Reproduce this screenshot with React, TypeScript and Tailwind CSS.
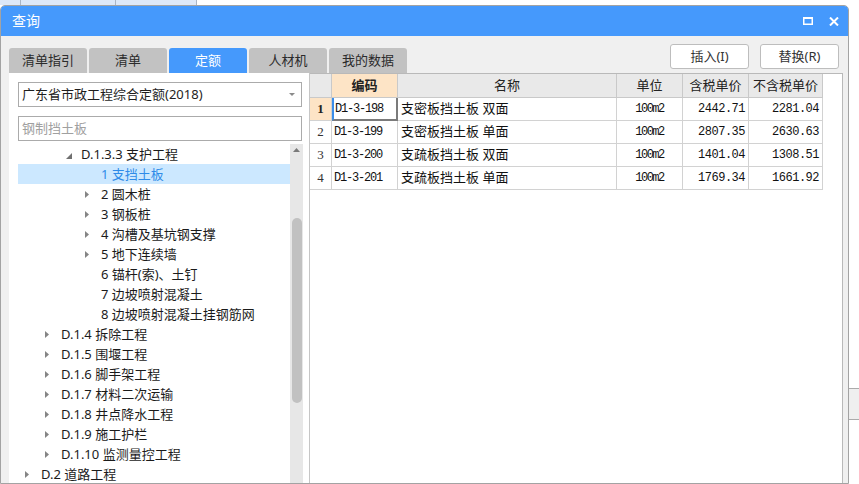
import React from 'react';

const tabs = ['清单指引', '清单', '定额', '人材机', '我的数据'];

type Node = { level: number; label: string; state: 'open' | 'closed' | 'leaf'; selected?: boolean };

const tree: Node[] = [
  { level: 2, label: 'D.1.3.3 支护工程', state: 'open' },
  { level: 3, label: '1 支挡土板', state: 'leaf', selected: true },
  { level: 3, label: '2 圆木桩', state: 'closed' },
  { level: 3, label: '3 钢板桩', state: 'closed' },
  { level: 3, label: '4 沟槽及基坑钢支撑', state: 'closed' },
  { level: 3, label: '5 地下连续墙', state: 'closed' },
  { level: 3, label: '6 锚杆(索)、土钉', state: 'leaf' },
  { level: 3, label: '7 边坡喷射混凝土', state: 'leaf' },
  { level: 3, label: '8 边坡喷射混凝土挂钢筋网', state: 'leaf' },
  { level: 1, label: 'D.1.4 拆除工程', state: 'closed' },
  { level: 1, label: 'D.1.5 围堰工程', state: 'closed' },
  { level: 1, label: 'D.1.6 脚手架工程', state: 'closed' },
  { level: 1, label: 'D.1.7 材料二次运输', state: 'closed' },
  { level: 1, label: 'D.1.8 井点降水工程', state: 'closed' },
  { level: 1, label: 'D.1.9 施工护栏', state: 'closed' },
  { level: 1, label: 'D.1.10 监测量控工程', state: 'closed' },
  { level: 0, label: 'D.2 道路工程', state: 'closed' },
];

const rows = [
  ['1', 'D1-3-198', '支密板挡土板 双面', '100m2', '2442.71', '2281.04'],
  ['2', 'D1-3-199', '支密板挡土板 单面', '100m2', '2807.35', '2630.63'],
  ['3', 'D1-3-200', '支疏板挡土板 双面', '100m2', '1401.04', '1308.51'],
  ['4', 'D1-3-201', '支疏板挡土板 单面', '100m2', '1769.34', '1661.92'],
];

const indent = ['pl-[7px]', 'pl-[27px]', 'pl-[47px]', 'pl-[67px]'];

const TreeRow: React.FC<{ node: Node }> = ({ node }) => (
  <div
    className={`h-[20px] flex items-center ${indent[node.level]} ${
      node.selected ? 'bg-[#cce8ff] text-[#2f8be8]' : 'text-[#1b1b1b]'
    }`}
  >
    <span className="w-[16px] h-[20px] shrink-0 flex items-center">
      {node.state === 'closed' && (
        <svg width="4" height="7" viewBox="0 0 4 7">
          <polygon points="0,0 4,3.5 0,7" fill="#858585" />
        </svg>
      )}
      {node.state === 'open' && (
        <svg width="6" height="6" viewBox="0 0 6 6" className="ml-[1px] mt-[3px]">
          <polygon points="6,0 6,6 0,6" fill="#707070" />
        </svg>
      )}
    </span>
    <span className="text-[13px] leading-[20px] whitespace-nowrap">{node.label}</span>
  </div>
);

const App: React.FC = () => {
  return (
    <div className="w-[859px] h-[484px] overflow-hidden bg-white font-['Noto_Sans','Noto_Sans_CJK_SC',sans-serif]">
      {/* strip of the window behind */}
      <div className="h-[5px] flex">
        <div className="w-[21px] bg-[#dde8f8] border-r border-[#aab5c5]" />
        <div className="w-[95px] bg-[#dde8f8] border-r border-[#aab5c5]" />
        <div className="w-[81px] bg-[#dde8f8] border-r border-[#aab5c5]" />
      </div>

      <div className="flex h-[479px]">
        <div className="w-[849px] h-full border border-[#a3a3a3] rounded-t-[5px] overflow-hidden bg-[#f0f0f0] flex flex-col">
          {/* title bar */}
          <div className="h-[30px] shrink-0 bg-[#4599fc] flex items-center justify-between pl-[11px] pr-[9px]">
            <span className="text-white text-[14px] leading-none">查询</span>
            <div className="flex items-center gap-[16px]">
              <svg width="10" height="8" viewBox="0 0 10 8">
                <rect x="0.75" y="1" width="8.5" height="6.25" fill="none" stroke="#fff" strokeWidth="1.5" />
                <rect x="0" y="0" width="10" height="2" fill="#fff" />
              </svg>
              <svg width="10" height="9" viewBox="0 0 10 9">
                <path d="M1 0.5 L9 8.5 M9 0.5 L1 8.5" stroke="#fff" strokeWidth="2" />
              </svg>
            </div>
          </div>

          {/* tabs + buttons */}
          <div className="h-[37px] shrink-0 flex justify-between pl-[8px] pr-[9px]">
            <div className="flex items-end gap-[2px]">
              {tabs.map((t) => (
                <div
                  key={t}
                  className={`w-[78px] h-[25px] rounded-t-[3px] flex items-center justify-center text-[13px] ${
                    t === '定额' ? 'bg-[#4599fc] text-white' : 'bg-[#c2c2c2] text-[#2b2b2b]'
                  }`}
                >
                  {t}
                </div>
              ))}
            </div>
            <div className="flex gap-[11px] mt-[8px]">
              {['插入(I)', '替换(R)'].map((b) => (
                <button
                  key={b}
                  className="w-[79px] h-[25px] bg-white border border-[#bdbdbd] rounded-[3px] text-[13px] text-[#333] flex items-center justify-center"
                >
                  {b}
                </button>
              ))}
            </div>
          </div>

          {/* panels */}
          <div className="flex-1 flex pl-[8px] min-h-0">
            {/* left panel */}
            <div className="w-[301px] bg-white border-r border-[#c6c6c6] pl-[9px] pt-[9px] flex flex-col">
              <div className="w-[284px] h-[25px] border border-[#ababab] flex items-center justify-between pl-[3px] pr-[6px]">
                <span className="text-[13px] text-[#1e1e1e]">广东省市政工程综合定额(2018)</span>
                <svg width="6" height="3" viewBox="0 0 6 3">
                  <polygon points="0,0 6,0 3,3" fill="#8a8a8a" />
                </svg>
              </div>
              <div className="w-[284px] h-[25px] mt-[9px] border border-[#ababab] flex items-center pl-[3px]">
                <span className="text-[13px] text-[#a0a0a0]">钢制挡土板</span>
              </div>
              <div className="flex mt-[3px] flex-1 min-h-0">
                <div className="w-[272px] overflow-hidden">
                  {tree.map((n) => (
                    <TreeRow key={n.label} node={n} />
                  ))}
                </div>
                <div className="w-[13px] bg-[#e7e7e7] flex flex-col items-center">
                  <svg width="7" height="4" viewBox="0 0 7 4" className="mt-[4px]">
                    <polygon points="0,4 7,4 3.5,0" fill="#7a7a7a" />
                  </svg>
                  <div className="mt-[66px] w-[10px] h-[185px] rounded-full bg-[#c1c1c1]" />
                </div>
              </div>
            </div>

            {/* right panel */}
            <div className="w-[533px] bg-white border-t border-r border-[#b9b9b9]">
              <div className="grid grid-cols-[22px_66px_219px_66px_66px_74px] w-[513px]">
                {['', '编码', '名称', '单位', '含税单价', '不含税单价'].map((h, i) => (
                  <div
                    key={i}
                    className={`h-[24px] border-r border-b border-[#c9c9c9] flex items-center justify-center text-[13px] text-[#222] ${
                      i === 1 ? 'bg-[#fde4c6] font-bold' : 'bg-[#e9e9e9]'
                    }`}
                  >
                    {h}
                  </div>
                ))}
                {rows.map((r, ri) => (
                  <React.Fragment key={r[0]}>
                    <div
                      className={`h-[23px] border-r border-b border-[#d2d2d2] flex items-center justify-center text-[13px] font-['Liberation_Serif',serif] ${
                        ri === 0 ? 'bg-[#fde4c6] font-bold text-[#222]' : 'bg-white text-[#333]'
                      }`}
                    >
                      {r[0]}
                    </div>
                    <div
                      className={`h-[23px] flex items-center font-['Liberation_Mono',monospace] text-[12px] tracking-[-1.2px] text-[#111] ${
                        ri === 0
                          ? 'border-l-2 border-l-[#3b8eea] border-r-2 border-b-2 border-r-[#7b7b7b] border-b-[#7b7b7b] pl-[1px]'
                          : 'border-r border-b border-[#d2d2d2] pl-[2px]'
                      }`}
                    >
                      {r[1]}
                    </div>
                    <div className="h-[23px] border-r border-b border-[#d2d2d2] flex items-center pl-[3px] text-[13px] text-[#111] whitespace-nowrap">
                      {r[2]}
                    </div>
                    <div className="h-[23px] border-r border-b border-[#d2d2d2] flex items-center justify-center font-['Liberation_Mono',monospace] text-[12px] tracking-[-1.5px] text-[#111]">
                      {r[3]}
                    </div>
                    <div className="h-[23px] border-r border-b border-[#d2d2d2] flex items-center justify-end pr-[3px] font-['Liberation_Mono',monospace] text-[12px] tracking-[-0.5px] text-[#111]">
                      {r[4]}
                    </div>
                    <div className="h-[23px] border-r border-b border-[#d2d2d2] flex items-center justify-end pr-[3px] font-['Liberation_Mono',monospace] text-[12px] tracking-[-0.5px] text-[#111]">
                      {r[5]}
                    </div>
                  </React.Fragment>
                ))}
              </div>
            </div>
          </div>
        </div>

        {/* window behind, right edge */}
        <div className="flex-1">
          <div className="mt-[383px] h-[32px] bg-[#efefef] border-y border-[#ababab]" />
        </div>
      </div>
    </div>
  );
};

export default App;
